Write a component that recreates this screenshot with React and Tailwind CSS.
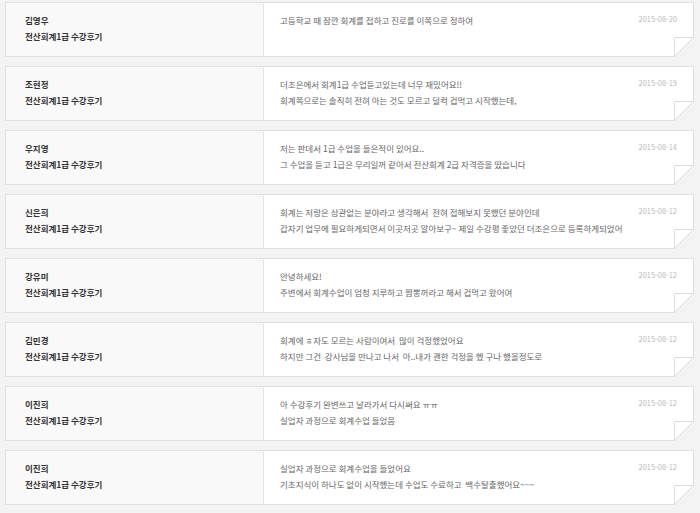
import React from "react";

const items = [
  { name: "김영우", date: "2015-08-20", lines: ["고등학교 때 잠깐 회계를 접하고 진로를 이쪽으로 정하여"] },
  { name: "조현정", date: "2015-08-19", lines: ["더조은에서 회계1급 수업듣고있는데 너무 재밌어요!!", "회계쪽으로는 솔직히 전혀 아는 것도 모르고 덜컥 겁먹고 시작했는데,"] },
  { name: "우지영", date: "2015-08-14", lines: ["저는 판데서 1급 수업을 들은적이 있어요..", "그 수업을 듣고 1급은 무리일꺼 같아서 전산회계 2급 자격증을 땄습니다"] },
  { name: "신은희", date: "2015-08-12", lines: ["회계는 저랑은 상관없는 분야라고 생각해서  전혀 접해보지 못했던 분야인데", "갑자기 업무에 필요하게되면서 이곳저곳 알아보구~ 제일 수강평 좋았던 더조은으로 등록하게되었어"] },
  { name: "강유미", date: "2015-08-12", lines: ["안녕하세요!", "주변에서 회계수업이 엄청 지루하고 짬뽕꺼라고 해서 겁먹고 왔어여"] },
  { name: "김민경", date: "2015-08-12", lines: ["회계에 ㅎ자도 모르는 사람이여서  많이 걱정했었어요", "하지만 그건  강사님을 만나고 나서  아..내가 괜한 걱정을 했 구나 했을정도로"] },
  { name: "이진희", date: "2015-08-12", lines: ["아 수강후기 완변쓰고 날라가서 다시써요 ㅠㅠ", "실업자 과정으로 회계수업 들었음"] },
  { name: "이진희", date: "2015-08-12", lines: ["실업자 과정으로 회계수업을 들었어요", "기초지식이 하나도 없이 시작했는데 수업도 수료하고  백수탈출했어요~~~"] },
];

function Fold() {
  return (
    <svg
      className="absolute right-[-1px] bottom-[-1px]"
      width="20"
      height="20"
      viewBox="0 0 20 20"
    >
      <polygon points="20,0 20,20 0,20" fill="#f3f3f3" />
      <polygon points="0.5,0.5 19.5,0.5 0.5,19.5" fill="#ffffff" />
      <polyline points="0.5,20 0.5,0.5 20,0.5" fill="none" stroke="#dcdcdc" strokeWidth="1" />
      <line x1="19.5" y1="0.5" x2="0.5" y2="19.5" stroke="#dcdcdc" strokeWidth="1" />
    </svg>
  );
}

export default function App() {
  return (
    <div
      className="w-[700px] h-[513px] overflow-hidden bg-[#f3f3f3] pt-[2px] pl-[5px] pr-[6px]"
      style={{ fontFamily: '"Noto Sans CJK KR", "Noto Sans", sans-serif' }}
    >
      <div className="flex flex-col gap-[9px]">
        {items.map((it, i) => (
          <div key={i} className="relative flex h-[55px] border border-[#e0e0e0] bg-white">
            <div className="w-[258px] shrink-0 bg-[#f9f9f9] border-r border-[#e6e6e6] pl-[19px] pt-[9px] text-[8.5px] leading-[16px] text-[#333] font-bold">
              <div>{it.name}</div>
              <div>전산회계1급 수강후기</div>
            </div>
            <div className="flex flex-1 justify-between pl-[16px] pr-[16px] pt-[9px]">
              <div className="text-[8.5px] leading-[16px] text-[#666]">
                {it.lines.map((l, j) => (
                  <div key={j} className="whitespace-pre">{l}</div>
                ))}
              </div>
              <div className="text-[7.5px] leading-[16px] text-[#bbb] mt-[-1px]">{it.date}</div>
            </div>
            <Fold />
          </div>
        ))}
      </div>
    </div>
  );
}
